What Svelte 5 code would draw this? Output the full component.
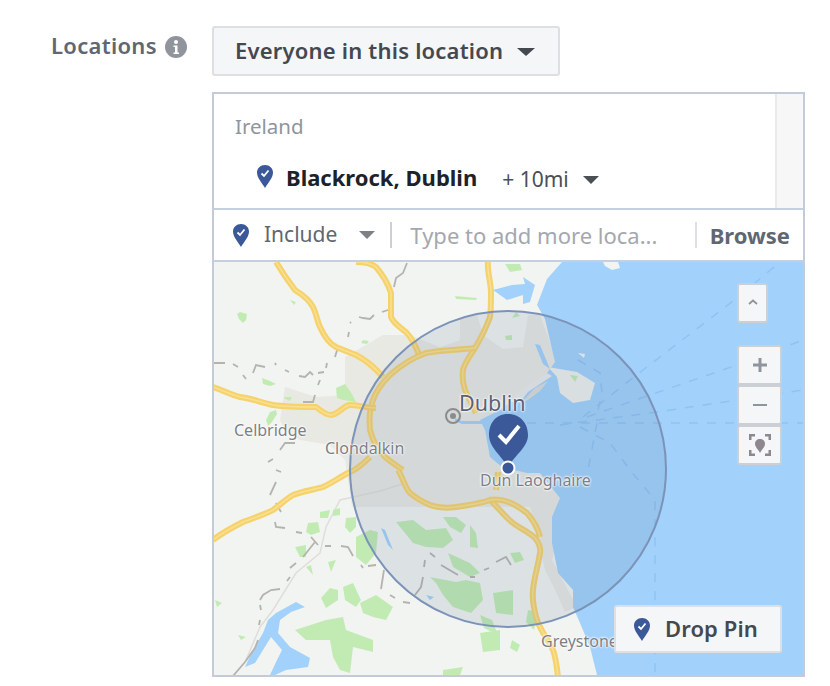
<script>
  const pinBody = "M8 0C12.5 0 16 3.300 16 7.600C16 13 11 18 8 23C5 18 0 13 0 7.600C0 3.300 3.500 0 8 0Z";
  const pinCheck = "M4.500 8.500L7 11L11.500 5.500";
  const roads = [
    "M276 262L285 276L295 290C303 295 310 301 313 307C317 315 317 321 320 327C325 338 330 344 336 347L356 355C368 361 376 369 383 377",
    "M356 262C365 262 371 263 376 267C382 274 388 283 391 293V317C394 324 401 328 406 332C412 338 415 345 420 357",
    "M488 262C487 272 491 282 491 293C491 302 491 310 490 317C486 328 481 338 475 348C470 356 465 362 463 370C462 378 463 384 465 390C469 398 472 405 476 413",
    "M475 348C458 350 440 350 426 353C412 358 400 366 390 375C381 384 376 391 373 400C369 410 369 420 370 430C373 442 379 451 385 457C391 462 397 466 403 470",
    "M213 387C222 390 232 395 240 397C251 398 262 403 273 405C287 407 303 407 316 407C321 411 326 415 331 415C338 415 344 405 350 405C358 405 366 408 376 408",
    "M213 540C222 533 233 527 243 522C253 518 264 515 273 510C280 505 286 499 293 495C303 491 313 490 323 487C332 483 340 477 348 473C356 470 364 463 370 457",
    "M398 470C403 478 405 488 410 493C416 498 423 502 430 505C438 508 448 508 456 507C468 505 480 504 490 500C497 506 504 516 513 523C521 529 529 532 535 538C539 543 541 548 540 553C538 566 534 578 533 590C532 600 534 610 537 620C541 632 549 640 553 650C556 658 557 668 558 677",
    "M490 500C503 498 514 503 527 513C533 520 538 528 540 537",
    "M496 490L498 472"
  ];
  const dashes = [
    "M213 363H225M233 364L238 367M243 375L246 379M253 373L256 365L265 367M275 363L276 365M285 370L289 372M299 376L305 377L310 372L313 375M318 373L324 372M326 368L327 363M318 385L320 380M315 395L313 402H303",
    "M335 357L338 347M348 337L349 332M350 323L351 322M359 317L363 318L370 319L374 315M382 312L388 310M394 287L396 278L403 273L407 263",
    "M280 450L285 443H295M268 462L273 459M270 495L276 482M276 470L281 472M276 503L281 512M275 522L276 527L285 528M296 532L302 533M311 537L318 545M315 542L303 557M296 563L290 568M290 577L287 581",
    "M280 589L271 590L263 595L260 600M260 605L261 610M260 620L259 625M258 640L255 648L245 662L233 676",
    "M325 546H331M341 546L348 547L353 556M361 565L363 568M368 566L376 565M384 570L381 589M390 595L395 598M403 602L410 603M415 595L421 587L423 577M424 567L425 560M430 553L435 557M441 565L458 575M470 577L475 577M484 570L489 568M496 562L506 557L511 565"
  ];
  const parks = [
    "M240 312L247 314L246 320L243 323L239 319L237 314Z","M363 340L369 341L367 344L361 343Z","M284 397L292 397L290 401L285 399Z",
    "M262 378L270 381L276 384L270 386L263 384ZM336 388L345 384L352 394L356 402L343 400L337 398Z","M270 412L276 410L277 414L272 422L268 426L266 420Z",
    "M320 512L330 510L328 518L320 518Z","M333 510L340 508L340 515L333 516Z","M308 523L318 522L320 532L311 535L306 532Z",
    "M346 518L356 517L356 527L350 533L345 527Z","M356 537L370 530L378 532L376 553L366 565L356 557Z",
    "M295 547L306 545L306 557L300 557Z","M306 567L311 565L313 575Z","M328 562L336 560L331 572Z",
    "M321 598L330 588L338 590L338 600L326 608Z","M343 587L353 583L361 600L356 607L345 600Z","M360 603L376 595L393 607L386 620L373 617L363 613Z",
    "M295 630L326 620L343 617L346 630L373 640L373 652L353 647L350 673L340 670L333 657L330 640L306 640Z",
    "M480 633L500 630L500 650L483 652Z","M443 670L463 667L460 675H443Z",
    "M396 522L413 520L426 530L446 528L453 540L443 548L426 547L413 543L405 533Z","M443 517L456 517L466 525L461 533L450 527Z",
    "M470 525L476 533L478 548L470 547Z","M448 553L470 563L480 573L470 577L453 567Z",
    "M430 577L456 582L466 580L480 583L483 600L471 613L453 607L443 595L436 583Z","M493 593L513 590L513 615L496 613Z",
    "M480 615L492 620L498 635L484 628Z","M510 553L520 552L524 560L515 563Z","M528 610L538 612L534 630L526 622Z","M512 640L520 645L517 652L510 648Z",
    "M455 296L477 298L476 300L456 299Z","M505 264L520 264L522 270L510 272Z","M290 300L296 302L294 305Z","M516 312L520 316L512 318Z",
    "M505 336L512 335L512 340L506 340Z","M570 375L578 376L575 382Z","M215 600L222 603L217 607Z","M238 635L246 637L241 640Z"
  ];
  const lakes = [
    "M276 613L296 602L305 607L291 612L280 620L278 633L290 647L310 658L308 667L286 670L275 675H270L277 660L282 650L271 637L263 650L255 663L245 667L253 650L263 633L268 620Z",
    "M381 528L385 530L393 550L388 545Z","M426 595L434 597L430 600Z",
    "M493 290L512 285L525 284L523 277L535 285L530 302L523 304L523 295L507 300Z","M535 344L540 345L550 369L543 364Z",
    "M455 418L462 421H484V424H462L455 421Z"
  ];
  const sea = "M562 262H803V675H597L590 647L580 623L573 607L573 590L558 573L552 543L552 517L560 498L540 473L527 473L502 467L490 457L485 430L480 420L500 410L520 395L547 373L555 362L545 319L537 305L547 279Z";
  const spokes = [
    "M583 417L643 370L737 298L780 262",
    "M587 417L650 395L737 365L803 340",
    "M560 425L657 412L737 400L803 390",
    "M527 423H803",
    "M597 423L588 470",
    "M580 427L610 443L630 470L655 500V675",
    "M578 360L600 373L602 393L598 410"
  ];
</script>

<div class="row">
  <div class="label">
    <span>Locations</span>
    <svg class="info" viewBox="0 0 22 22" aria-hidden="true">
      <circle cx="11" cy="11" r="11" fill="#90949c" />
      <circle cx="11" cy="6" r="2" fill="#fff" />
      <path d="M8.500 9.500H12.500V16.500H14V18H8.500V16.500H10V11H8.500Z" fill="#fff" />
    </svg>
  </div>
  <div class="main">
    <button class="audience"><span>Everyone in this location</span> <i class="caret big"></i></button>
    <div class="panel">
      <div class="selected">
        <div class="list">
          <div class="country">Ireland</div>
          <div class="place">
            <svg class="pin" viewBox="0 0 16 23"><path d={pinBody} fill="#3b5998"/><path d={pinCheck} fill="none" stroke="#fff" stroke-width="1.800"/></svg>
            <b>Blackrock, Dublin</b>
            <span class="radius">+ 10mi</span>
            <i class="caret"></i>
          </div>
        </div>
        <div class="track"></div>
      </div>
      <div class="search">
        <svg class="pin" viewBox="0 0 16 23"><path d={pinBody} fill="#3b5998"/><path d={pinCheck} fill="none" stroke="#fff" stroke-width="1.800"/></svg>
        <span class="include">Include</span>
        <i class="caret grey"></i>
        <span class="sep first"></span>
        <span class="placeholder">Type to add more loca...</span>
        <span class="sep"></span>
        <span class="browse">Browse</span>
      </div>
      <div class="map">
        <svg class="canvas" viewBox="214 262 589 413" aria-hidden="true">
          <rect x="214" y="262" width="589" height="413" fill="#f2f4f1"/>
          <path d="M345 357L383 335L410 335L440 347L460 340L460 318L477 314L483 335L503 349L523 347L528 315L540 315L560 370L600 400L570 500L552 560L577 607L565 612L555 590L545 570L530 507L352 507L345 460L330 445L300 440L285 430L280 420L285 387L316 397L345 395Z" fill="#e9e9e3"/>
          <path d={sea} fill="#a2d1fb"/>
          <path d="M548 367L577 372L595 383L590 400L573 403L560 393L557 377Z" fill="#eef0ec"/>
          <path d="M510 402L520 390L547 373L552 376L528 392L520 402Z" fill="#e9ebe8"/>
          <path d="M522 402L535 388L548 381L540 391L528 400Z" fill="#dcdcd8"/>
          <path d="M578 353L585 354L584 358Z" fill="#f2f4f1"/>
          <path d="M603 262H618L620 268L612 270L605 266Z" fill="#f2f4f1"/>
          <path d="M406 483L380 491L340 500L326 527L320 553L296 573L273 610L260 627L246 660" fill="none" stroke="#dededa" stroke-width="1.500"/>
          {#each parks as d}<path {d} fill="#c2ebb4"/>{/each}
          {#each lakes as d}<path {d} fill="#a2d1fb"/>{/each}
          {#each spokes as d}<path {d} fill="none" stroke="#8fc3f3" stroke-width="1.500" stroke-dasharray="9 9"/>{/each}
          {#each dashes as d}<path {d} fill="none" stroke="#b5b3ae" stroke-width="1.800"/>{/each}
          {#each roads as d}
            <path {d} fill="none" stroke="#f6d26d" stroke-width="6"/>
            <path {d} fill="none" stroke="#f9e08f" stroke-width="1.500"/>
          {/each}
          <circle cx="508" cy="469" r="158" fill="#4c6a96" fill-opacity=".13"/>
          <circle cx="508" cy="469" r="158" fill="none" stroke="#7b93b8" stroke-width="2"/>
          <circle cx="453" cy="416" r="7" fill="none" stroke="#8c8c8c" stroke-width="2"/>
          <circle cx="453" cy="416" r="3" fill="#8c8c8c"/>
          <path d="M508 414C521 414 528 424 528 435C528 447 516 454 508 467C500 454 489 447 489 435C489 424 495 414 508 414Z" fill="#3b5998"/>
          <path d="M499 435L506 442L519 426" fill="none" stroke="#fff" stroke-width="4"/>
          <circle cx="508" cy="468" r="6.500" fill="#3b5998" stroke="#fff" stroke-width="2"/>
        </svg>
        <span class="place-label dublin">Dublin</span>
        <span class="place-label celbridge">Celbridge</span>
        <span class="place-label clondalkin">Clondalkin</span>
        <span class="place-label dun">Dun Laoghaire</span>
        <span class="place-label greystones">Greystones</span>
        <button class="ctl up" aria-label="Collapse"><svg viewBox="0 0 10 6"><path d="M1 5L5 1.500L9 5" fill="none" stroke="#90949c" stroke-width="1.800"/></svg></button>
        <div class="zoomers">
          <button class="ctl" aria-label="Zoom in"><svg viewBox="0 0 14 14"><path d="M7 0V14M0 7H14" stroke="#90949c" stroke-width="3"/></svg></button>
          <button class="ctl" aria-label="Zoom out"><svg viewBox="0 0 14 14"><path d="M0 7H14" stroke="#90949c" stroke-width="2"/></svg></button>
          <button class="ctl" aria-label="Recenter"><svg viewBox="0 0 22 22"><path d="M0 6V0H6V2.500H2.500V6ZM16 0H22V6H19.500V2.500H16ZM0 16H2.500V19.500H6V22H0ZM22 16V22H16V19.500H19.500V16Z" fill="#8f8790"/><path d="M11 5C14 5 16 7 16 10C16 13 13 15 11 19C9 15 6 13 6 10C6 7 8 5 11 5Z" fill="#8f8790"/></svg></button>
        </div>
        <button class="drop">
          <svg class="pin" viewBox="0 0 16 23"><path d={pinBody} fill="#3b5998"/><path d={pinCheck} fill="none" stroke="#fff" stroke-width="1.800"/></svg>
          <span>Drop Pin</span>
        </button>
      </div>
    </div>
  </div>
</div>

<style>
  :global(body) { margin: 0; background: #fff; }
  .row {
    display: flex;
    width: 830px;
    height: 686px;
    box-sizing: border-box;
    padding: 26px 0 0 51px;
    font-family: "Noto Sans", "Open Sans", sans-serif;
    overflow: hidden;
  }
  .label {
    display: flex;
    gap: 8px;
    width: 161px;
    height: 42px;
    color: #606770;
    font-size: 22px;
    font-weight: 600;
    line-height: 39px;
    letter-spacing: .3px;
    align-items: flex-start;
  }
  .info { width: 22px; height: 22px; margin-top: 10px; }
  .main { width: 593px; }
  button { font-family: inherit; cursor: pointer; }
  .audience {
    display: flex;
    align-items: center;
    gap: 14px;
    width: 348px;
    height: 50px;
    box-sizing: border-box;
    padding: 0 0 0 21px;
    border: 2px solid #dddfe2;
    border-radius: 3px;
    background: #f5f6f7;
    color: #444950;
    font-size: 22px;
    font-weight: 600;
    letter-spacing: .2px;
    white-space: nowrap;
  }
  .audience span { margin-bottom: 3px; }
  .audience .caret { margin-top: 2px; }
  .caret {
    display: inline-block;
    width: 0;
    height: 0;
    border-style: solid;
    border-width: 8px 8px 0;
    border-color: #4b4f56 transparent transparent;
    flex: none;
  }
  .caret.big { border-width: 8px 9px 0; border-color: #444950 transparent transparent; }
  .caret.grey { border-color: #7c8087 transparent transparent; }
  .panel {
    margin-top: 16px;
    width: 593px;
    box-sizing: border-box;
    border: 2px solid #c4cad6;
  }
  .selected { display: flex; height: 114px; border-bottom: 2px solid #c4cfe0; }
  .list { flex: 1; padding: 18px 0 0 21px; }
  .track { width: 28px; background: #f7f7f7; border-left: 2px solid #eaeaea; box-sizing: border-box; }
  .country { color: #90949c; font-size: 20.500px; line-height: 28px; }
  .place { display: flex; align-items: center; margin: 20px 0 0 22px; height: 32px; }
  .pin { width: 16px; height: 23px; flex: none; }
  .place b { margin-left: 13px; margin-top: 1px; color: #1d2129; font-size: 22px; font-weight: 700; white-space: nowrap; }
  .radius { margin-left: 25px; margin-top: 6px; color: #4b4f56; font-size: 21px; white-space: nowrap; }
  .place .caret { margin-left: 14px; margin-top: 8px; }
  .search {
    display: flex;
    align-items: center;
    height: 50px;
    padding-left: 19px;
    border-bottom: 2px solid #c4cfe0;
    white-space: nowrap;
  }
  .include { margin-left: 15px; margin-bottom: 3px; color: #606770; font-size: 21px; }
  .search .caret { margin-left: 22px; }
  .sep { width: 2px; height: 26px; background: #dddfe2; flex: none; }
  .sep.first { margin-left: 15px; background: #ccd0d5; }
  .placeholder { flex: 1; margin-left: 18px; color: #a4a8ae; font-size: 22px; }
  .browse { margin-left: 13px; padding-right: 13px; color: #606770; font-size: 22px; font-weight: 700; }
  .map { position: relative; height: 413px; overflow: hidden; }
  .canvas { display: block; width: 589px; height: 413px; }
  .place-label {
    position: absolute;
    color: #7d7f86;
    font-size: 16px;
    line-height: 20px;
    white-space: nowrap;
    text-shadow: 0 0 2px #fff, 0 0 2px #fff, 0 0 3px #fff;
  }
  .dublin { left: 245px; top: 131px; font-size: 21.500px; color: #5a6274; }
  .celbridge { left: 20px; top: 158px; }
  .clondalkin { left: 111px; top: 176px; }
  .dun { left: 266px; top: 208px; }
  .greystones { left: 327px; top: 369px; }
  .ctl {
    display: flex;
    align-items: center;
    justify-content: center;
    padding: 0;
    width: 45px;
    height: 40px;
    box-sizing: border-box;
    border: 2px solid #ccd0d5;
    border-radius: 3px;
    background: #f5f6f7;
  }
  .ctl svg { width: 14px; height: 14px; }
  .ctl:last-child svg { width: 22px; height: 22px; }
  .up { position: absolute; left: 523px; top: 21px; width: 31px; }
  .up svg { width: 10px; height: 6px; margin-bottom: 3px; }
  .zoomers { position: absolute; left: 523px; top: 83px; display: flex; flex-direction: column; }
  .drop {
    position: absolute;
    left: 400px;
    top: 343px;
    width: 168px;
    height: 48px;
    display: flex;
    align-items: center;
    padding: 0 0 0 18px;
    gap: 15px;
    box-sizing: border-box;
    border: 2px solid #dddfe2;
    border-radius: 3px;
    background: #f5f6f7;
    color: #444950;
    font-size: 22px;
    font-weight: 600;
    letter-spacing: .1px;
  }
  .drop span { margin-bottom: 3px; }
</style>
